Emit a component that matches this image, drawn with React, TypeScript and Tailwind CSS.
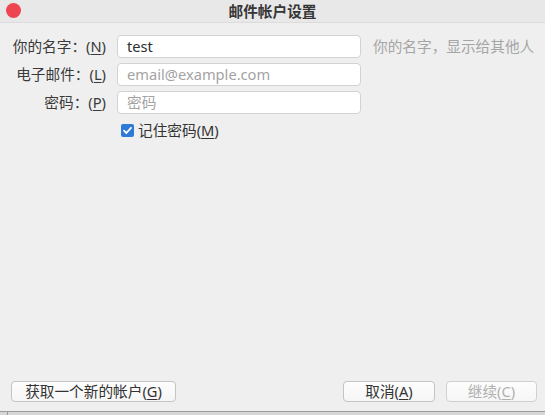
import React from "react";

const font = { fontFamily: '"Noto Sans", "Noto Sans CJK SC", sans-serif' };

function Label({ text, k }: { text: string; k: string }) {
  return (
    <div className="h-[23px] flex items-center justify-end text-[#3a3a3a] whitespace-nowrap">
      <span>{text}</span>
      <span>
        (<span className="underline underline-offset-2">{k}</span>)
      </span>
    </div>
  );
}

function Field({ value, placeholder }: { value?: string; placeholder?: string }) {
  return (
    <div className="h-[23px] w-[244px] rounded-[4px] border border-[#d2d2d2] bg-white flex items-center pl-[9px]">
      {value ? (
        <span className="text-[#2e2e2e]">{value}</span>
      ) : (
        <span className="text-[#a3a3a3]">{placeholder}</span>
      )}
    </div>
  );
}

function Btn({ children, w, disabled }: { children: React.ReactNode; w: string; disabled?: boolean }) {
  return (
    <div
      className={`h-[21px] ${w} rounded-[4px] border border-[#c4c4c4] bg-gradient-to-b from-[#fdfdfd] to-[#f6f6f6] flex items-center justify-center ${
        disabled ? "text-[#b0b0b0] border-[#d0d0d0]" : "text-[#333333]"
      }`}
    >
      {children}
    </div>
  );
}

export default function App() {
  return (
    <div className="w-[545px] h-[415px] bg-[#efefef] flex flex-col text-[14.67px] leading-none overflow-hidden" style={font}>
      <div className="h-[23px] shrink-0 bg-[#e8e8e8] border-b border-[#dcdcdc] relative flex items-center justify-center">
        <div className="absolute left-[6px] top-[3px] w-[15px] h-[15px] rounded-full bg-[#ee4651]" />
        <span className="font-bold text-[#363636]">邮件帐户设置</span>
      </div>
      <div className="flex-1 pt-[12px]">
        <div className="grid grid-cols-[106px_244px_auto] gap-x-[11px] gap-y-[5px] items-center">
          <Label text="你的名字：" k="N" />
          <Field value="test" />
          <span className="text-[#a5a5a5] whitespace-nowrap pl-[1px]">你的名字，显示给其他人</span>
          <Label text="电子邮件：" k="L" />
          <Field placeholder="email@example.com" />
          <span />
          <Label text="密码：" k="P" />
          <Field placeholder="密码" />
          <span />
          <span />
          <div className="h-[23px] flex items-center pl-[4px] gap-[4px] text-[#333333]">
            <span className="w-[13px] h-[13px] rounded-[2px] bg-[#2f7ad8] flex items-center justify-center">
              <svg width="11" height="11" viewBox="0 0 11 11">
                <path d="M2 5.6 L4.4 8 L9 2.8" fill="none" stroke="white" strokeWidth="1.8" strokeLinecap="round" strokeLinejoin="round" />
              </svg>
            </span>
            <span>
              记住密码(<span className="underline underline-offset-2">M</span>)
            </span>
          </div>
          <span />
        </div>
      </div>
      <div className="flex items-center pl-[11px] pr-[8px] pb-[9px]">
        <Btn w="w-[165px]">
          获取一个新的帐户(<span className="underline underline-offset-2">G</span>)
        </Btn>
        <div className="flex-1" />
        <Btn w="w-[92px]">
          取消(<span className="underline underline-offset-2">A</span>)
        </Btn>
        <div className="w-[11px]" />
        <Btn w="w-[91px]" disabled>
          继续(<span className="underline underline-offset-2">C</span>)
        </Btn>
      </div>
      <div className="h-[4px] shrink-0 border-t border-[#9c9c9c] bg-[#d6d6d6] flex">
        <div className="ml-[7px] w-px bg-[#9c9c9c]" />
      </div>
    </div>
  );
}
